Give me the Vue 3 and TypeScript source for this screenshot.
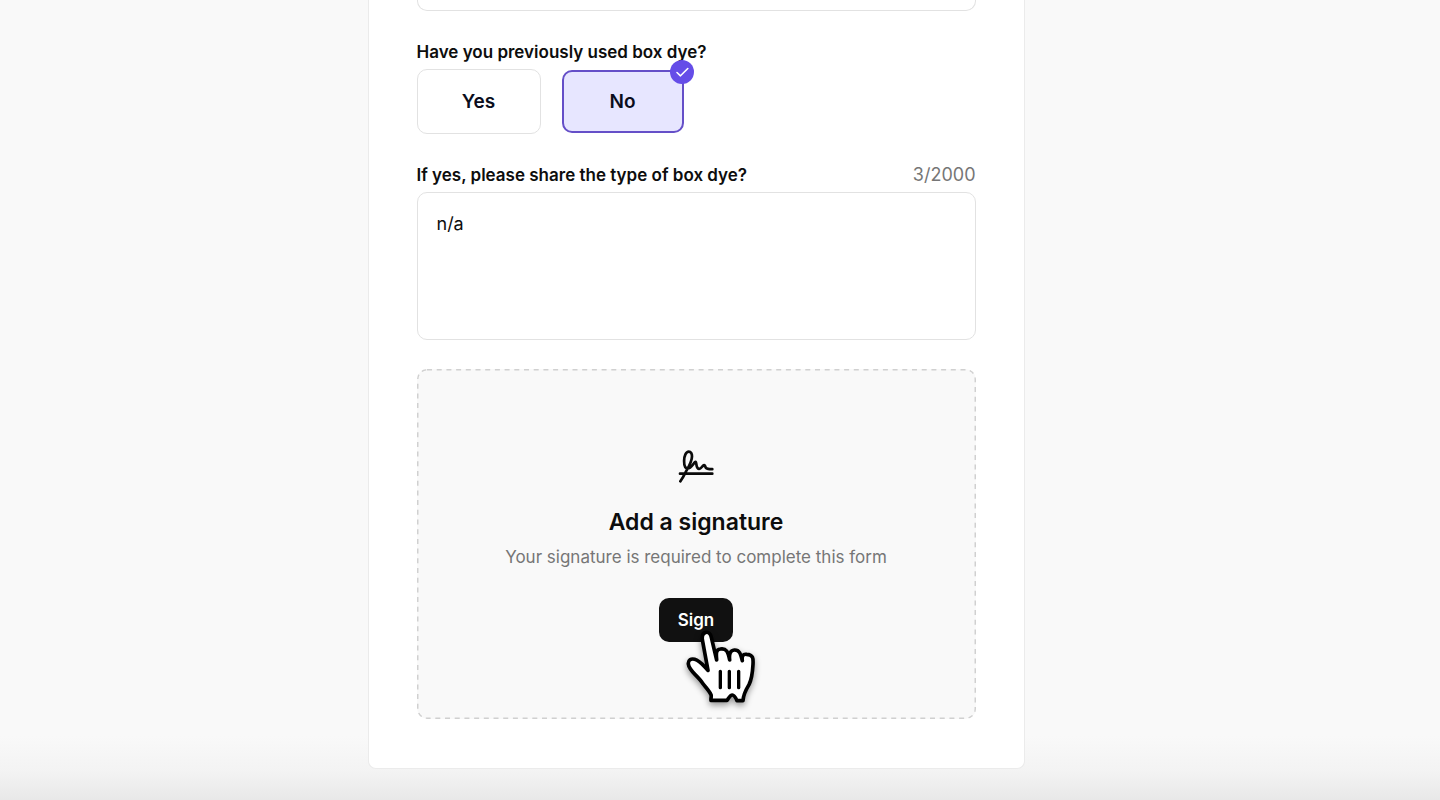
<script setup lang="ts">
import { computed, ref } from 'vue'

const options = ['Yes', 'No'] as const
const usedBoxDye = ref<string>('No')
const dyeType = ref('n/a')
const maxLength = 2000
const counter = computed(() => `${dyeType.value.length}/${maxLength}`)
</script>

<template>
  <main class="page">
    <form class="card" @submit.prevent>
      <textarea class="field previous" aria-label="Previous answer"></textarea>

      <fieldset class="group">
        <legend class="label">Have you previously used box dye?</legend>
        <div class="choices">
          <label
            v-for="option in options"
            :key="option"
            class="choice"
            :class="{ selected: usedBoxDye === option }"
          >
            <input v-model="usedBoxDye" type="radio" name="box-dye" :value="option" />
            <span>{{ option }}</span>
            <svg v-if="usedBoxDye === option" class="badge" viewBox="0 0 24 24" aria-hidden="true">
              <circle cx="12" cy="12" r="12" fill="#654de8" />
              <path d="M7 12.500L10.500 15.800L17.800 8.500" fill="none" stroke="#fff" stroke-width="1.6" stroke-linecap="round" stroke-linejoin="round" />
            </svg>
          </label>
        </div>
      </fieldset>

      <div class="group">
        <div class="label-row">
          <label class="label" for="dye-type">If yes, please share the type of box dye?</label>
          <span class="counter">{{ counter }}</span>
        </div>
        <textarea id="dye-type" v-model="dyeType" class="field answer" :maxlength="maxLength"></textarea>
      </div>

      <section class="signature">
        <svg class="outline" aria-hidden="true">
          <rect x="0" y="0" width="100%" height="100%" rx="10" fill="#f9f9f9" stroke="#d0d0d0" stroke-width="3" stroke-dasharray="5 4.7" />
        </svg>
        <svg class="signature-icon" viewBox="0 0 40 40" aria-hidden="true">
          <path
            d="M4.3 35.3C7 32 8.500 28.500 10.500 24.500C13.500 19.500 15.900 15 16 10.500C16.100 7.500 14.900 5.600 12.800 5.600C10 5.600 8.100 10 8.100 15C8.100 19.500 9.200 22.500 11.700 22.500C14.700 22.500 16.800 18.500 18.900 16.200C19.800 15.400 20.100 16.600 20.300 18C20.700 21 21.500 22.900 23.200 22.900C25.200 22.900 26 20 27.700 19.200C28.900 18.700 29.100 20.500 29.700 21.500C30.700 23.300 33 23.200 36.300 23.200M4 27.700H36.300"
            fill="none" stroke="#0b0b0b" stroke-width="2.7" stroke-linecap="round" stroke-linejoin="round"
          />
        </svg>
        <h2>Add a signature</h2>
        <p>Your signature is required to complete this form</p>
        <div class="action">
          <button type="button" class="sign">Sign</button>
          <svg class="pointer" viewBox="129 111 225 225" aria-hidden="true">
            <path
              d="M213 328C212 322 215 317 213 311C208 300 198 290 188 277C174 254 147 240 145 219C144 207 153 202 164 205C180 209 190 224 204 238C199 210 193 178 187 146C184 120 209 116 214 139L230 207C229 190 226 176 241 174C259 171 264 182 269 207C267 190 270 178 283 177C299 176 302 190 307 209C305 195 309 188 320 190C340 191 340 203 339 220C338 239 337 261 327 281C318 296 310 309 309 329H291C287 320 282 312 277 312C270 312 267 320 261 328Z"
              fill="#fff" stroke="#000" stroke-width="11" stroke-linejoin="round"
            />
            <path d="M241 241V290M268 241V290M296 241V290" fill="none" stroke="#000" stroke-width="10" stroke-linecap="round" />
          </svg>
        </div>
      </section>
    </form>
  </main>
</template>

<style>
body {
  margin: 0;
  background: #f9f9f9;
}
</style>

<style scoped>
* {
  box-sizing: border-box;
}

.page {
  display: flex;
  justify-content: center;
  min-height: 100vh;
  padding: 0 48px 31px 0;
  background: linear-gradient(to top, #e8e8e8, #f3f3f3 28px, #f9f9f9 64px);
  color: #0d0d0d;
  font-family: Inter, "Liberation Sans", sans-serif;
  font-size: 17px;
  line-height: 24px;
}

.card {
  display: flex;
  flex-direction: column;
  gap: 29px;
  width: 100%;
  max-width: 657px;
  padding: 0 48px 49px;
  border: 1px solid #ebebeb;
  border-top: 0;
  border-radius: 0 0 8px 8px;
  background: #fff;
}

.field {
  display: block;
  width: 100%;
  margin: 0;
  border: 1px solid #e2e2e2;
  border-radius: 10px;
  background: #fff;
  color: inherit;
  font: inherit;
  resize: none;
  outline: none;
}

.previous {
  height: 11px;
  padding: 0;
  border-top: 0;
  border-radius: 0 0 10px 10px;
  overflow: hidden;
}

.answer {
  height: 148px;
  padding: 19px;
  font-size: 18px;
}

.group {
  display: flex;
  flex-direction: column;
  gap: 5px;
  min-width: 0;
  margin: 0;
  padding: 0;
  border: 0;
}

.label {
  padding: 0;
  font-weight: 600;
}

legend.label {
  margin-bottom: 5px;
}

.label-row {
  display: flex;
  justify-content: space-between;
}

.counter {
  color: #767676;
  font-size: 18px;
}

.choices {
  display: flex;
  gap: 20px;
}

.choice {
  position: relative;
  display: flex;
  align-items: center;
  justify-content: center;
  width: 124px;
  height: 65px;
  border: 1px solid #e2e2e2;
  border-radius: 10px;
  color: #0b0d1c;
  font-size: 19px;
  font-weight: 600;
  cursor: pointer;
}

.choice input {
  position: absolute;
  opacity: 0;
}

.selected {
  width: 122px;
  height: 63px;
  margin: 1px;
  border: 2px solid #654fc8;
  background: #e7e6ff;
}

.badge {
  position: absolute;
  top: -12px;
  right: -12px;
  width: 24px;
  height: 24px;
}

.signature {
  position: relative;
  display: flex;
  flex-direction: column;
  align-items: center;
  padding: 77px 20px;
  border-radius: 10px;
  text-align: center;
}

.outline {
  position: absolute;
  inset: 0;
  width: 100%;
  height: 100%;
  border-radius: 10px;
}

.signature-icon {
  position: relative;
  width: 40px;
  height: 40px;
}

h2 {
  position: relative;
  margin: 20px 0 7px;
  font-size: 23px;
  font-weight: 600;
  line-height: 32px;
}

p {
  position: relative;
  margin: 0 0 29px;
  color: #767676;
}

.action {
  position: relative;
}

.sign {
  display: block;
  height: 44px;
  padding: 0 19px;
  border: 0;
  border-radius: 10px;
  background: #111;
  color: #fff;
  font: inherit;
  font-weight: 600;
}

.pointer {
  position: absolute;
  top: 30px;
  left: 24px;
  width: 75px;
  height: 75px;
  overflow: visible;
  filter: drop-shadow(0 3px 3px rgba(0, 0, 0, 0.4));
  pointer-events: none;
}
</style>
